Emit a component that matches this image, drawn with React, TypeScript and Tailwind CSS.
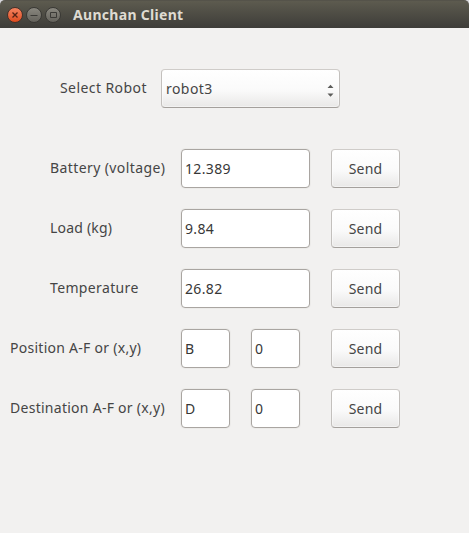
import type { ReactNode } from 'react';

function Label({ className = '', children }: { className?: string; children: ReactNode }) {
  return (
    <label className={`block shrink-0 whitespace-nowrap text-[14px] leading-[37px] text-[#454545] ${className}`}>
      {children}
    </label>
  );
}

function Entry({ value, className }: { value: string; className: string }) {
  return (
    <div
      className={`flex h-[39px] shrink-0 items-center rounded-[4px] border border-[#a9a5a1] bg-white pl-[3px] text-[14px] tracking-[0.35px] text-[#373737] shadow-[0_0_0_1px_#ecebe9] ${className}`}
    >
      <span>{value}</span>
    </div>
  );
}

const raised =
  'rounded-[4px] border border-[#c3c0bd] border-b-[#a4a09c] border-t-[#cfccc9] bg-linear-to-b from-white via-[#fafafa] via-55% to-[#e9e8e7] shadow-[inset_0_0_0_1px_rgba(255,255,255,0.45)]';

function SendButton() {
  return (
    <button
      className={`ml-[21px] flex h-[39px] w-[69px] shrink-0 items-center justify-center text-[14px] tracking-[0.2px] text-[#454545] ${raised}`}
    >
      Send
    </button>
  );
}

function WindowButton({ close = false, children }: { close?: boolean; children: ReactNode }) {
  return (
    <span
      className={`flex size-4 items-center justify-center rounded-full border ${
        close
          ? 'border-[#45312a] bg-linear-to-b from-[#f4835f] to-[#df4b1b]'
          : 'border-[#3a3935] bg-linear-to-b from-[#89877f] to-[#65635c]'
      }`}
    >
      <svg className="shrink-0" width="14" height="14" viewBox="0 0 14 14" fill="none" stroke={close ? '#542315' : '#3b3a36'}>
        {children}
      </svg>
    </span>
  );
}

export default function App() {
  return (
    <div className="h-[533px] w-[469px] overflow-hidden bg-[#f2f1f0] font-['Noto_Sans',sans-serif]">
      <div className="bg-[#d8d8dc]">
        <header className="flex h-7 items-center rounded-t-[5px] border-t border-[#55534a] bg-linear-to-b from-[#5d5b4f] to-[#3e3d39] pl-[7px]">
          <div className="flex gap-[3px]">
            <WindowButton close>
              <path d="M4.5 4.5l5 5M9.5 4.5l-5 5" strokeWidth="1.3" />
            </WindowButton>
            <WindowButton>
              <path d="M3.5 7.5h7" />
            </WindowButton>
            <WindowButton>
              <path d="M4.5 4.5h6v5h-6z" />
            </WindowButton>
          </div>
          <h1 className="ml-[12px] whitespace-nowrap text-[14px] font-bold leading-5 tracking-[0.3px] text-[#dfdbd2]">
            Aunchan Client
          </h1>
        </header>
      </div>

      <main className="pt-[41px]">
        <div className="flex pl-[60px]">
          <Label className="w-[101px] tracking-[0.42px]">Select Robot</Label>
          <div className={`flex h-[39px] w-[179px] items-center justify-between pl-1 pr-[5px] text-[14px] tracking-[0.45px] text-[#454545] ${raised}`}>
            <span>robot3</span>
            <svg className="mt-[3px]" width="7" height="13" viewBox="0 0 7 13" fill="#5c5c5a">
              <path d="M.5 4L3.5 .8 6.5 4zM.5 9.5h6l-3 3.2z" />
            </svg>
          </div>
        </div>

        <div className="mt-[41px] flex flex-col gap-[21px]">
          <div className="flex pl-[50px]">
            <Label className="w-[131px] tracking-[0.4px]">Battery (voltage)</Label>
            <Entry value="12.389" className="w-[129px]" />
            <SendButton />
          </div>
          <div className="flex pl-[50px]">
            <Label className="w-[131px] tracking-[0.2px]">Load (kg)</Label>
            <Entry value="9.84" className="w-[129px]" />
            <SendButton />
          </div>
          <div className="flex pl-[50px]">
            <Label className="w-[131px] tracking-[0.36px]">Temperature</Label>
            <Entry value="26.82" className="w-[129px]" />
            <SendButton />
          </div>
          <div className="flex pl-[10px]">
            <Label className="w-[171px] tracking-[0.27px]">Position A-F or (x,y)</Label>
            <Entry value="B" className="w-[49px]" />
            <Entry value="0" className="ml-[21px] w-[49px]" />
            <div className="w-[10px]" />
            <SendButton />
          </div>
          <div className="flex pl-[10px]">
            <Label className="w-[171px] tracking-[0.27px]">Destination A-F or (x,y)</Label>
            <Entry value="D" className="w-[49px]" />
            <Entry value="0" className="ml-[21px] w-[49px]" />
            <div className="w-[10px]" />
            <SendButton />
          </div>
        </div>
      </main>
    </div>
  );
}
